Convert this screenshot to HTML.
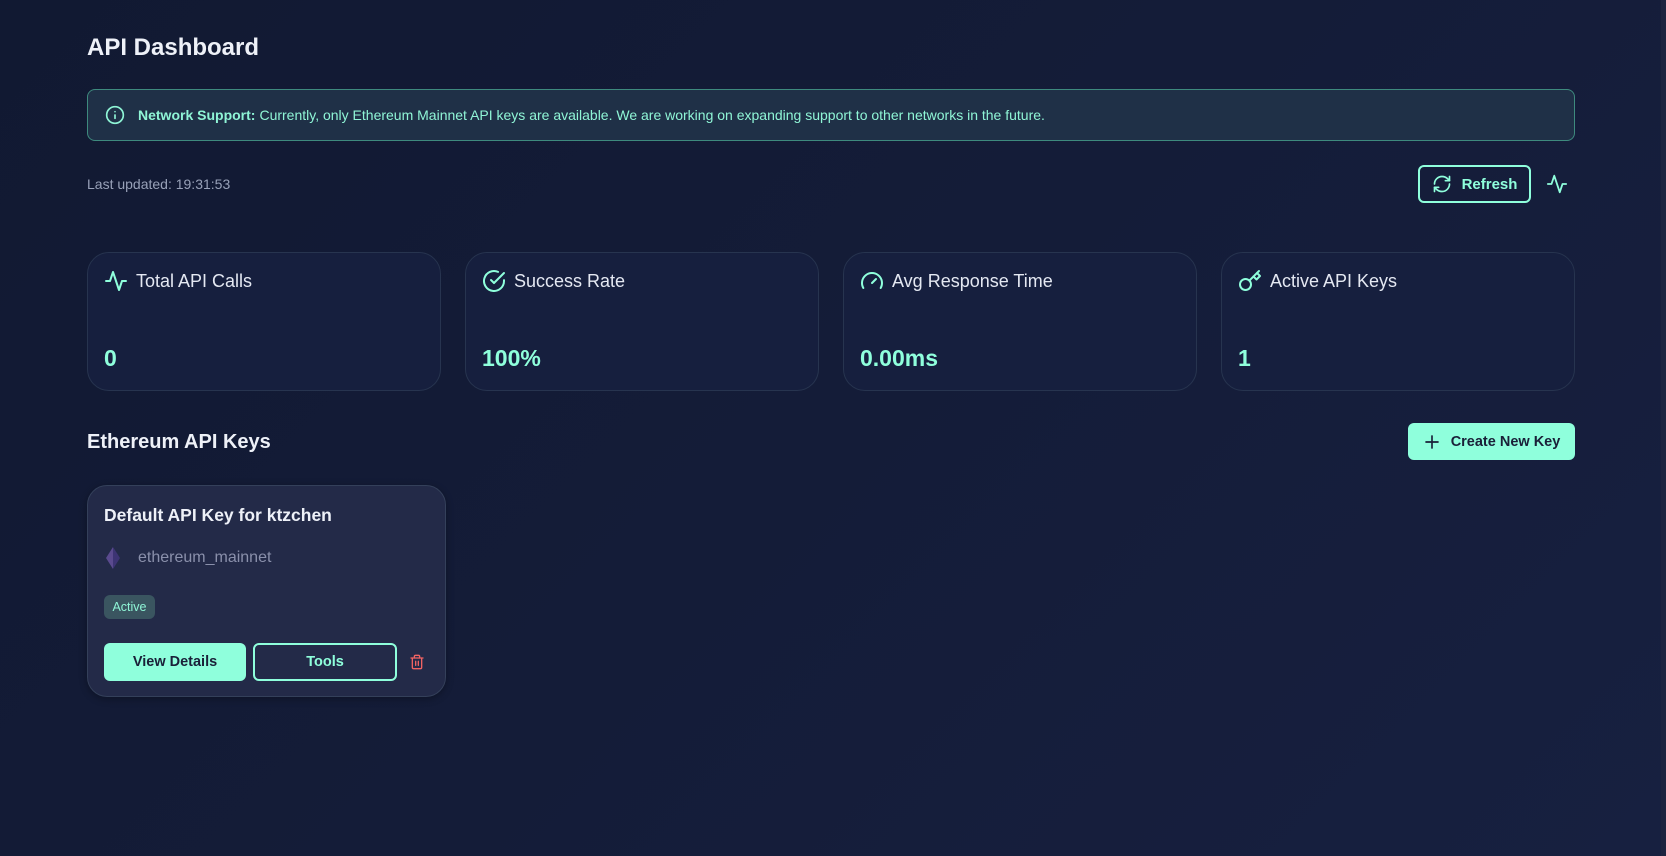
<!DOCTYPE html>
<html><head><meta charset="utf-8"><style>
*{box-sizing:border-box;margin:0;padding:0}
html,body{width:1666px;height:856px;overflow:hidden}
body{background:linear-gradient(135deg,#111932 0%,#141c38 50%,#172040 100%);font-family:"Liberation Sans",sans-serif;color:#e6e9f2;position:relative}
.abs{position:absolute}
h1{position:absolute;left:87px;top:34px;font-size:24px;font-weight:bold;color:#eef1f8}
.banner{left:87px;top:89px;width:1488px;height:52px;border:1px solid #3e8a7e;border-radius:8px;background:#1f3047;display:flex;align-items:center;padding-left:17px;font-size:14px;color:#8ff5d6}
.banner b{margin-left:13px;margin-right:4px}
.upd{left:87px;top:176px;font-size:14px;color:#98a1b8}
.refresh{left:1418px;top:165px;width:113px;height:38px;border:2px solid #8fffdc;border-radius:6px;display:flex;align-items:center;justify-content:center;gap:10px;color:#8fffdc;font-weight:bold;font-size:15px}
.card{top:252px;width:354px;height:139px;border:1px solid #27344f;border-radius:22px;background:#161f3e}
.card .t{position:absolute;left:16px;top:16px;display:flex;align-items:center;gap:8px;font-size:18px;color:#e4e8f2}
.card .v{position:absolute;left:16px;top:92px;font-size:23px;font-weight:bold;color:#8fffdc}
.sec{left:87px;top:431px;font-size:20px;font-weight:bold;color:#eef1f8}
.create{left:1408px;top:423px;width:167px;height:37px;background:#8fffdc;border-radius:6px;display:flex;align-items:center;justify-content:center;gap:10px;font-weight:bold;font-size:14.5px;color:#1a2038}
.key{left:87px;top:485px;width:359px;height:212px;border:1px solid #34405a;border-radius:20px;background:#232a48;box-shadow:0 2px 8px rgba(0,0,0,.3)}
.key .kt{position:absolute;left:16px;top:19px;font-size:17.5px;font-weight:bold;color:#eef1f8}
.key .net{position:absolute;left:18px;top:61px;display:flex;align-items:center;gap:18px;font-size:16px;color:#8a90ab}
.key .net svg{flex:none}
.badge{position:absolute;left:16px;top:109px;width:51px;height:24px;border-radius:6px;background:#3a5560;color:#8ff5d6;font-size:12.5px;display:flex;align-items:center;justify-content:center}
.vd{position:absolute;left:16px;top:157px;width:142px;height:38px;border-radius:6px;background:#8fffdc;color:#1a2038;font-weight:bold;font-size:14.5px;display:flex;align-items:center;justify-content:center}
.tools{position:absolute;left:165px;top:157px;width:144px;height:38px;border-radius:6px;border:2px solid #8fffdc;color:#8fffdc;font-weight:bold;font-size:14.5px;display:flex;align-items:center;justify-content:center}
.trash{position:absolute;left:321px;top:167px}
.sb{left:1661px;top:0;width:5px;height:856px;background:#1c2440}
</style></head><body>
<h1>API Dashboard</h1>
<div class="abs banner"><svg width="20" height="20" viewBox="0 0 24 24" fill="none" stroke="#8ff5d6" stroke-width="2" stroke-linecap="round"><circle cx="12" cy="12" r="10"/><path d="M12 16v-4M12 8h.01"/></svg><b>Network Support:</b> Currently, only Ethereum Mainnet API keys are available. We are working on expanding support to other networks in the future.</div>
<div class="abs upd">Last updated: 19:31:53</div>
<div class="abs refresh"><svg width="20" height="20" viewBox="0 0 24 24" fill="none" stroke="#8fffdc" stroke-width="2" stroke-linecap="round" stroke-linejoin="round"><path d="M3 12a9 9 0 0 1 9-9 9.75 9.75 0 0 1 6.74 2.74L21 8"/><path d="M21 3v5h-5"/><path d="M21 12a9 9 0 0 1-9 9 9.75 9.75 0 0 1-6.74-2.74L3 16"/><path d="M8 16H3v5"/></svg>Refresh</div>
<svg class="abs" style="left:1546px;top:173px" width="22" height="22" viewBox="0 0 24 24" fill="none" stroke="#8fffdc" stroke-width="2" stroke-linecap="round" stroke-linejoin="round"><path d="M22 12h-4l-3 9L9 3l-3 9H2"/></svg>

<div class="abs card" style="left:87px"><div class="t"><svg width="24" height="24" viewBox="0 0 24 24" fill="none" stroke="#8fffdc" stroke-width="2" stroke-linecap="round" stroke-linejoin="round"><path d="M22 12h-4l-3 9L9 3l-3 9H2"/></svg>Total API Calls</div><div class="v">0</div></div>
<div class="abs card" style="left:465px"><div class="t"><svg width="24" height="24" viewBox="0 0 24 24" fill="none" stroke="#8fffdc" stroke-width="2" stroke-linecap="round" stroke-linejoin="round"><path d="M22 11.08V12a10 10 0 1 1-5.93-9.14"/><path d="M22 4 12 14.01l-3-3"/></svg>Success Rate</div><div class="v">100%</div></div>
<div class="abs card" style="left:843px"><div class="t"><svg width="24" height="24" viewBox="0 0 24 24" fill="none" stroke="#8fffdc" stroke-width="2" stroke-linecap="round" stroke-linejoin="round"><path d="m12 14 4-4"/><path d="M3.34 19a10 10 0 1 1 17.32 0"/></svg>Avg Response Time</div><div class="v">0.00ms</div></div>
<div class="abs card" style="left:1221px"><div class="t"><svg width="24" height="24" viewBox="0 0 24 24" fill="none" stroke="#8fffdc" stroke-width="2" stroke-linecap="round" stroke-linejoin="round"><circle cx="7.5" cy="15.5" r="5.5"/><path d="m21 2-9.6 9.6"/><path d="m15.5 7.5 3 3L22 7l-3-3"/></svg>Active API Keys</div><div class="v">1</div></div>

<div class="abs sec">Ethereum API Keys</div>
<div class="abs create"><svg width="18" height="18" viewBox="0 0 24 24" fill="none" stroke="#1a2038" stroke-width="2.2" stroke-linecap="round"><path d="M12 4v16M4 12h16"/></svg>Create New Key</div>

<div class="abs key">
<div class="kt">Default API Key for ktzchen</div>
<div class="net"><svg width="14" height="22" viewBox="0 0 14 22"><path d="M7 0 0 11l7 11z" fill="#5a4a8e"/><path d="M7 0l7 11-7 11z" fill="#3d3474"/></svg>ethereum_mainnet</div>
<div class="badge">Active</div>
<div class="vd">View Details</div>
<div class="tools">Tools</div>
<svg class="trash" width="16" height="18" viewBox="0 0 24 24" fill="none" stroke="#f06363" stroke-width="2" stroke-linecap="round" stroke-linejoin="round"><path d="M3 6h18"/><path d="M19 6v14a2 2 0 0 1-2 2H7a2 2 0 0 1-2-2V6"/><path d="M8 6V4a2 2 0 0 1 2-2h4a2 2 0 0 1 2 2v2"/><path d="M10 11v6M14 11v6"/></svg>
</div>
<div class="abs sb"></div>
</body></html>
